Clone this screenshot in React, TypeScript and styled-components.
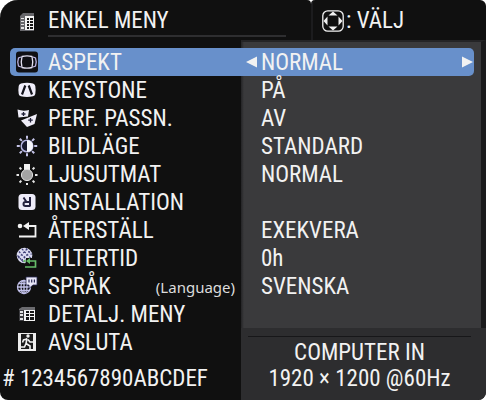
import React from "react";
import styled, { createGlobalStyle } from "styled-components";

const GlobalStyle = createGlobalStyle`
  *, *::before, *::after { box-sizing: border-box; }
  body { margin: 0; background: #fff; }
`;

const Osd = styled.main`
  display: flex;
  flex-direction: column;
  min-height: 100vh;
  overflow: hidden;
  border-radius: 18px 0 8px 8px;
  background: #101010;
  color: #f2f2f2;
  font: 400 23px/28px "Roboto Condensed", "DejaVu Sans Condensed", sans-serif;
  white-space: nowrap;
`;

const Header = styled.header`
  display: grid;
  grid-template-columns: 311fr 175fr;
  height: 40px;
  background: #fff;
`;

const TitleBar = styled.div`
  display: flex;
  align-items: flex-start;
  gap: 10px;
  padding: 7px 25px 0 16px;
  border-radius: 0 4px 0 0;
  background: #101010;
`;

const Title = styled.h1`
  flex: 1;
  margin: 0;
  border-bottom: 2px solid #2e2e30;
  font: inherit;
`;

const KeyHint = styled.div`
  display: flex;
  align-items: center;
  gap: 2px;
  padding: 2px 9px 0;
  border-left: 2px solid #1c1c1e;
  border-radius: 4px 6px 0 0;
  background: #101010;
`;

const Body = styled.div`
  display: grid;
  flex: 1;
  grid-template-columns: 241fr 245fr;
`;

const MenuColumn = styled.nav`
  display: flex;
  flex-direction: column;
  justify-content: space-between;
  padding: 8px 0 7px;
`;

const List = styled.ul`
  margin: 0;
  padding: 0 0 0 10px;
  list-style: none;
`;

const MenuButton = styled.button<{ $active?: boolean }>`
  display: flex;
  align-items: center;
  width: 100%;
  height: 28px;
  padding: 0 6px;
  gap: 10px;
  border: 0;
  border-radius: 5px 0 0 5px;
  background: ${(p) => (p.$active ? "#6890cb" : "transparent")};
  color: inherit;
  font: inherit;
  text-align: left;
`;

const MenuLabel = styled.span`
  padding-top: 2px;
`;

const Note = styled.small`
  margin-left: auto;
  padding-top: 2px;
  color: #dcdcdc;
  font: 400 15px/26px "Noto Sans", sans-serif;
`;

const SerialNumber = styled.div`
  padding-left: 2px;
`;

const ValueColumn = styled.section`
  display: flex;
  flex-direction: column;
  background: #2d2d2f;
`;

const ValuePanel = styled.div`
  height: 288px;
  padding: 6px 7px 0 0;
  border-top: 2px solid #242426;
  border-right: 5px solid #1a1a1c;
  background: linear-gradient(90deg, #242426, #3a3a3c 3px);
`;

const Values = styled.ul`
  margin: 0;
  padding: 0;
  list-style: none;
`;

const ValueRow = styled.li<{ $active?: boolean }>`
  display: flex;
  align-items: center;
  height: 28px;
  padding: 0 1px 0 5px;
  border-radius: 0 5px 5px 0;
  background: ${(p) => (p.$active ? "#6890cb" : "transparent")};
`;

const ValueText = styled.span<{ $inset?: boolean }>`
  flex: 1;
  padding-top: 2px;
  padding-left: ${(p) => (p.$inset ? 15 : 3)}px;
`;

const StepButton = styled.button`
  display: flex;
  padding: 0;
  border: 0;
  background: transparent;
  color: #f2f2f2;
`;

const Source = styled.footer`
  display: flex;
  flex: 1;
  flex-direction: column;
  margin: 8px 15px 0 7px;
  padding-top: 3px;
  border-top: 1px solid #171719;
  line-height: 26px;
  text-align: center;
`;

const Icon = styled.svg`
  flex: none;
  width: 22px;
  height: 22px;
`;

const HeaderIcon = styled(Icon)`
  align-self: center;
`;

const Arrow = styled.svg`
  width: 12px;
  height: 12px;
`;

const TableIcon = () => (
  <HeaderIcon viewBox="0 2 22 22" aria-hidden="true">
    <path d="M4 5l3-3h11v18H4z" fill="#66666a" />
    <path d="M9 5h9v14H9z" fill="#f4f4f4" />
    <path d="M11 7h2v2h-2zM14 7h3v2h-3zM11 10h2v2h-2zM14 10h3v2h-3zM11 13h2v2h-2zM14 13h3v2h-3zM11 16h2v2h-2zM14 16h3v2h-3z" fill="#161616" />
    <path d="M5 7h3v1H5zM5 10h3v1H5zM5 13h3v1H5zM5 16h3v2H5z" fill="#e4e4e4" />
  </HeaderIcon>
);

const MenuTableIcon = () => (
  <Icon viewBox="0 0 22 22" aria-hidden="true">
    <path d="M3 6l3-2h13v3H3z" fill="#6a6a6e" />
    <path d="M3 7h5v11H3z" fill="#3c3c40" />
    <path d="M8 7h11v11H8z" fill="#f4f4f4" />
    <path d="M10 8h3v2h-3zM14 8h4v2h-4zM10 11h3v2h-3zM14 11h4v2h-4zM10 14h3v3h-3zM14 14h4v3h-4z" fill="#161616" />
    <path d="M4 8h3v2H4zM4 11h3v2H4zM4 15h3v2H4z" fill="#e4e4e4" />
  </Icon>
);

const AspectIcon = () => (
  <Icon viewBox="0 0 22 22" aria-hidden="true">
    <rect y="0.5" width="22" height="21" rx="3" fill="#101014" />
    <g fill="none" stroke="#bdb4e2" strokeWidth="1.300">
      <path d="M6 5.500Q11 4.300 16 5.500Q17.500 11 16 16.500Q11 17.700 6 16.500Q4.500 11 6 5.500z" stroke="#e2dff0" />
      <path d="M5 6L2.500 7Q1 11 2.500 15L5 16M17 6l2.500 1Q21 11 19.500 15L17 16" />
    </g>
  </Icon>
);

const KeystoneIcon = () => (
  <Icon viewBox="0 0 22 22" aria-hidden="true">
    <path d="M5 4.500Q11 3 17 4.500Q19 5 19.300 7Q20 11 19.300 15Q19 17 17 17.300Q11 18.600 5 17.300Q3 17 2.700 15Q2 11 2.700 7Q3 5 5 4.500z" fill="#f0eefa" />
    <path d="M9.300 6.500L6 15.500M12.700 6.500L16 15.500" stroke="#14141c" strokeWidth="2.200" />
  </Icon>
);

const PerfectFitIcon = () => (
  <Icon viewBox="0 0 22 22" aria-hidden="true">
    <path d="M1.500 2.500Q7 4.500 13 3L12 9.500L2.500 10.500z" fill="#efedf8" />
    <path d="M5 13.500L21 7L18.500 17L11 20z" fill="#efedf8" />
    <path d="M7.500 5v4M5.500 7h4M14.500 11v4.500M12.200 13.200h4.600" stroke="#22223a" strokeWidth="1.300" />
  </Icon>
);

const RAYS = [0, 45, 90, 135, 180, 225, 270, 315];

const PictureIcon = () => (
  <Icon viewBox="0 0 22 22" aria-hidden="true">
    {RAYS.map((angle) => (
      <path key={angle} d="M11 .8v3" stroke="#c3c2e6" strokeWidth="2" transform={`rotate(${angle} 11 11)`} />
    ))}
    <circle cx="11" cy="11" r="5.800" fill="#17182c" stroke="#b4b4e0" strokeWidth="1.500" />
    <path d="M11 5a6 6 0 0 1 0 12z" fill="#f6f6fa" />
  </Icon>
);

const LampIcon = () => (
  <Icon viewBox="0 0 22 22" aria-hidden="true">
    {RAYS.slice(1).map((angle) => (
      <path key={angle} d="M11 1.500v2.500" stroke="#e6e6e6" strokeWidth="2" transform={`rotate(${angle} 11 12)`} />
    ))}
    <path d="M8 1h6v6H8z" fill="#f2f2f2" />
    <circle cx="11" cy="12" r="5.600" fill="#a3a3a3" stroke="#dedede" />
  </Icon>
);

const InstallIcon = () => (
  <Icon viewBox="0 0 22 22" aria-hidden="true">
    <rect x="2.500" y="3" width="17" height="16" rx="3.500" fill="#eeecf9" />
    <path d="M14 6v9.500M14 15H9.500Q7.500 15 7.500 13T9.500 11H14M10.500 11L7.500 6.500" fill="none" stroke="#24223f" strokeWidth="2" />
  </Icon>
);

const ResetIcon = () => (
  <Icon viewBox="0 0 22 22" aria-hidden="true">
    <circle cx="4" cy="7" r="2.300" fill="#f2f2f2" />
    <path d="M7 7l6-4v8z" fill="#f2f2f2" />
    <path d="M12 7h7.500v10.500H3" fill="none" stroke="#f2f2f2" strokeWidth="1.800" />
  </Icon>
);

const FilterIcon = () => (
  <Icon viewBox="0 0 22 22" aria-hidden="true">
    <circle cx="8.500" cy="8.500" r="7.800" fill="#dcdcf2" />
    <g stroke="#3f4078" strokeWidth="1.200" strokeDasharray="2 1.500" fill="none">
      <path d="M3 4.500L12 14.500M6 2l9 9.500M1.500 8.500L7.500 15M10 1.500l5.500 6M14 4.500L5 14M11 2L2 11.500" />
    </g>
    <path d="M10 11h12v11H9z" fill="#101010" />
    <circle cx="8.500" cy="14" r="1.200" fill="#66bd69" />
    <path d="M10 14l4-3v6z" fill="#66bd69" />
    <path d="M13 14h6.500v6H9" fill="none" stroke="#66bd69" strokeWidth="1.700" />
  </Icon>
);

const LanguageIcon = () => (
  <Icon viewBox="0 0 22 22" aria-hidden="true">
    <g fill="none" stroke="#c2c1ea" strokeWidth="1.300">
      <circle cx="8" cy="12" r="6.500" />
      <ellipse cx="8" cy="12" rx="3" ry="6.500" />
      <path d="M8 5.500v13M1.500 12h13M2.500 8.500h11M2.500 15.500h11" />
    </g>
    <path d="M10 2h11v8h-4l-4 3.500V10h-3z" fill="#e8e7f8" stroke="#292852" strokeWidth=".800" />
    <path d="M13 4.500v3M15.700 4.500v3M18.400 4.500v3" stroke="#292852" strokeWidth="1.200" />
  </Icon>
);

const ExitIcon = () => (
  <Icon viewBox="0 0 22 22" aria-hidden="true">
    <path d="M2 2h18v18H2z" fill="#ececec" />
    <path d="M5 3h12v15H5z" fill="#1b1b1b" />
    <circle cx="12" cy="5" r="1.700" fill="#f2f2f2" />
    <path d="M11 7.500l-1 5 4 2.500v4M10 12.500L8.500 16H5M11 8L7.500 9l-1 2.500M12 8.500l2 2.500h3" fill="none" stroke="#f2f2f2" strokeWidth="1.600" />
  </Icon>
);

const PadIcon = () => (
  <Icon viewBox="0 0 22 22" aria-hidden="true">
    <rect x=".8" y=".8" width="20.400" height="20.400" rx="5" fill="none" stroke="#f2f2f2" strokeWidth="1.300" />
    <path d="M11 1.500l4.500 4h-9zM11 20.500l4.500-4h-9zM1.500 11l4-4.500v9zM20.500 11l-4-4.500v9z" fill="#f2f2f2" />
  </Icon>
);

const MENU = [
  { label: "ASPEKT", value: "NORMAL", icon: AspectIcon },
  { label: "KEYSTONE", value: "PÅ", icon: KeystoneIcon },
  { label: "PERF. PASSN.", value: "AV", icon: PerfectFitIcon },
  { label: "BILDLÄGE", value: "STANDARD", icon: PictureIcon },
  { label: "LJUSUTMAT", value: "NORMAL", icon: LampIcon },
  { label: "INSTALLATION", value: "", icon: InstallIcon },
  { label: "ÅTERSTÄLL", value: "EXEKVERA", icon: ResetIcon },
  { label: "FILTERTID", value: "0h", icon: FilterIcon },
  { label: "SPRÅK", note: "(Language)", value: "SVENSKA", icon: LanguageIcon },
  { label: "DETALJ. MENY", icon: MenuTableIcon },
  { label: "AVSLUTA", icon: ExitIcon },
];

export default function App() {
  return (
    <>
      <GlobalStyle />
      <Osd>
        <Header>
          <TitleBar>
            <TableIcon />
            <Title>ENKEL MENY</Title>
          </TitleBar>
          <KeyHint>
            <PadIcon />
            <span>: VÄLJ</span>
          </KeyHint>
        </Header>
        <Body>
          <MenuColumn>
            <List>
              {MENU.map(({ label, note, icon: ItemIcon }, i) => (
                <li key={label}>
                  <MenuButton type="button" $active={i === 0}>
                    <ItemIcon />
                    <MenuLabel>{label}</MenuLabel>
                    {note && <Note>{note}</Note>}
                  </MenuButton>
                </li>
              ))}
            </List>
            <SerialNumber># 1234567890ABCDEF</SerialNumber>
          </MenuColumn>
          <ValueColumn>
            <ValuePanel>
              <Values>
                {MENU.filter((m) => m.value !== undefined).map(({ label, value }, i) => (
                  <ValueRow key={label} $active={i === 0}>
                    {i === 0 && (
                      <StepButton type="button" aria-label="Föregående">
                        <Arrow viewBox="0 0 12 12" aria-hidden="true">
                          <path d="M0 6L11 .5v11z" fill="currentColor" />
                        </Arrow>
                      </StepButton>
                    )}
                    <ValueText $inset={i !== 0}>{value}</ValueText>
                    {i === 0 && (
                      <StepButton type="button" aria-label="Nästa">
                        <Arrow viewBox="0 0 12 12" aria-hidden="true">
                          <path d="M12 6L1 .5v11z" fill="currentColor" />
                        </Arrow>
                      </StepButton>
                    )}
                  </ValueRow>
                ))}
              </Values>
            </ValuePanel>
            <Source>
              <span>COMPUTER IN</span>
              <span>1920 × 1200 @60Hz</span>
            </Source>
          </ValueColumn>
        </Body>
      </Osd>
    </>
  );
}
